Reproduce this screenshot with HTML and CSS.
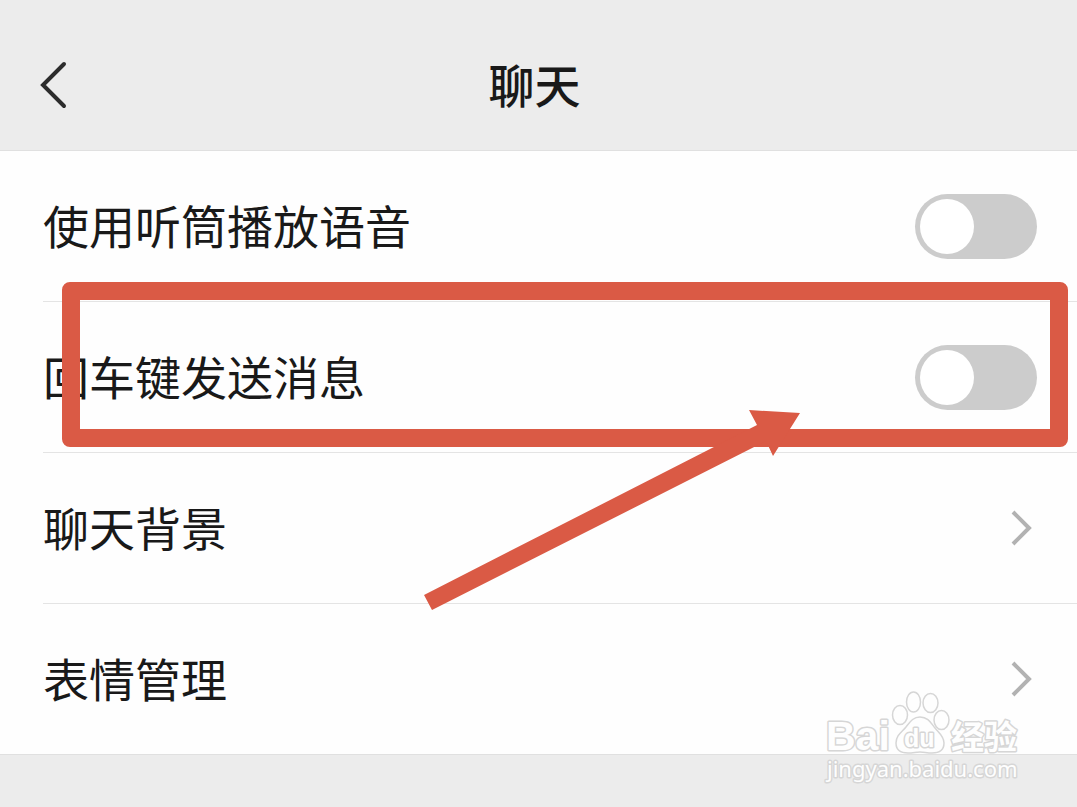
FILE: index.html
```html
<!DOCTYPE html>
<html lang="zh-CN">
<head>
    <meta charset="UTF-8">
    <meta name="viewport" content="width=device-width, initial-scale=1.0">
    <title>聊天</title>
    <link rel="stylesheet" href="styles.css">
</head>
<body>
    <header class="header">
        <button type="button" class="back" aria-label="返回">
            <svg width="28" height="48" viewBox="0 0 28 48"><path d="M24 3 3 24l21 21"/></svg>
        </button>
        <h1 class="title">聊天</h1>
    </header>

    <main class="list">
        <div class="row">
            <label class="text" for="earpiece">使用听筒播放语音</label>
            <input type="checkbox" class="switch" id="earpiece">
        </div>
        <div class="row">
            <label class="text" for="enterSend">回车键发送消息</label>
            <input type="checkbox" class="switch" id="enterSend">
            <div class="highlight"></div>
            <svg class="arrow" width="376" height="202" viewBox="0 0 376 202">
                <path d="M0 186 333 16 325 1 376 4 349 47 342 32 8 201z"/>
            </svg>
        </div>
        <a class="row" href="#">
            <span class="text">聊天背景</span>
            <svg class="chevron" width="22" height="38" viewBox="0 0 22 38"><path d="M3 3l16 16L3 35"/></svg>
        </a>
        <a class="row" href="#">
            <span class="text">表情管理</span>
            <svg class="chevron" width="22" height="38" viewBox="0 0 22 38"><path d="M3 3l16 16L3 35"/></svg>
        </a>
    </main>

    <footer class="footer">
        <svg class="watermark" width="206" height="104" viewBox="0 0 206 104">
            <ellipse cx="80" cy="27" rx="7.5" ry="9.5"/>
            <ellipse cx="93.5" cy="14" rx="7" ry="10"/>
            <ellipse cx="110.5" cy="15" rx="7.5" ry="9.5"/>
            <ellipse cx="121.5" cy="32" rx="7.5" ry="9.5"/>
            <path d="M100 29c8 0 11 6 15 11s9 8 9 15c0 8-6 10-12 10-5 0-8-1-12-1s-7 1-12 1c-8 0-12-4-12-10 0-8 6-11 10-16s7-10 14-10z"/>
            <text class="brand" x="6" y="62">Bai</text>
            <text class="du" x="84" y="59">du</text>
            <text class="name" x="131" y="61">经验</text>
            <text class="site" x="7" y="89">jingyan.baidu.com</text>
        </svg>
    </footer>
</body>
</html>
```
FILE: styles.css
```css
* {
    box-sizing: border-box;
}

body {
    margin: 0;
    min-height: 100vh;
    display: flex;
    flex-direction: column;
    background: #ececec;
    color: #191919;
    font-family: "Noto Sans CJK SC", sans-serif;
    font-size: 46px;
    line-height: 64px;
}

/* Header */
.header {
    display: grid;
    grid-template-columns: 1fr auto 1fr;
    align-items: center;
    padding: 51px 48px 31px 40px;
    border-bottom: 1px solid #e0e0e0;
}

.back {
    justify-self: start;
    display: flex;
    padding: 0;
    border: none;
    background: none;
    cursor: pointer;
}

.back path {
    fill: none;
    stroke: #2c2c2c;
    stroke-width: 4;
    stroke-linecap: round;
}

.title {
    margin: 0;
    padding-bottom: 4px;
    font-size: 46px;
    font-weight: 500;
}

/* Settings */
.list {
    padding-left: 43px;
    background: #fefefe;
}

.row {
    position: relative;
    display: flex;
    justify-content: space-between;
    align-items: center;
    padding: 41px 40px 41px 0;
    border-bottom: 1px solid #e4e4e4;
    color: inherit;
    text-decoration: none;
}

.row:last-child {
    border-bottom: none;
}

.text {
    padding-bottom: 4px;
}

.switch {
    appearance: none;
    display: flex;
    align-items: center;
    width: 122px;
    height: 65px;
    margin: 0;
    padding: 5px;
    border-radius: 33px;
    background: #cccccc;
    cursor: pointer;
}

.switch::before {
    content: "";
    width: 54px;
    height: 55px;
    border-radius: 50%;
    background: #ffffff;
}

.switch:checked {
    justify-content: flex-end;
    background: #07c160;
}

.chevron {
    margin-right: 5px;
}

.chevron path {
    fill: none;
    stroke: #b2b2b2;
    stroke-width: 4;
}

/* Red marks over the second row */
.highlight {
    position: absolute;
    top: -20px;
    right: 9px;
    bottom: 5px;
    left: 19px;
    border: 18px solid #da5a45;
    border-radius: 8px;
    pointer-events: none;
}

.arrow {
    position: absolute;
    top: 107px;
    left: 381px;
    z-index: 1;
    fill: #da5a45;
    pointer-events: none;
}

/* Footer */
.footer {
    position: relative;
    flex: 1;
    min-height: 53px;
    border-top: 1px solid #e0e0e0;
}

.watermark {
    position: absolute;
    top: -67px;
    right: 51px;
    fill: #fefefe;
    stroke: #d6d6d6;
    stroke-width: 1.5;
}

.watermark text {
    stroke-width: 3;
    stroke-linejoin: round;
    paint-order: stroke;
}

.brand {
    font: bold 41px "Liberation Sans", sans-serif;
}

.du {
    font: bold 25px "Liberation Sans", sans-serif;
}

.name {
    font: bold 33px "Noto Sans CJK SC", sans-serif;
}

.site {
    font: 22px "Noto Sans", sans-serif;
}
```
